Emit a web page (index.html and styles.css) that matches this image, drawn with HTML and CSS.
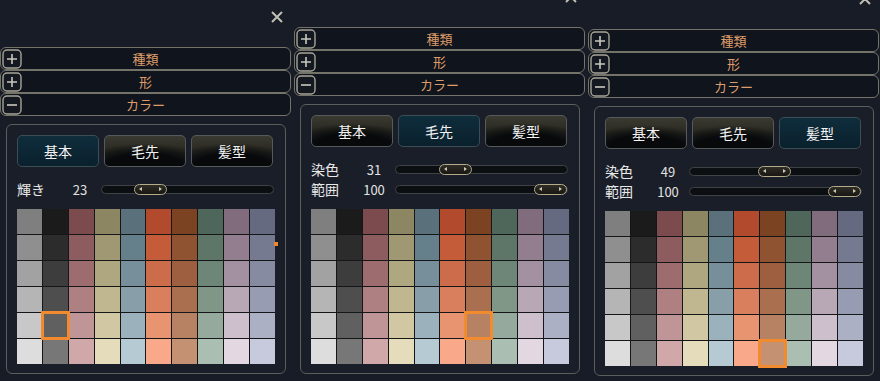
FILE: index.html
```html
<!DOCTYPE html>
<html lang="ja">
<head>
  <meta charset="UTF-8">
  <title>ヘアカラー</title>
  <link rel="stylesheet" href="styles.css">
</head>
<body>

<div class="shots">

  <section class="win win-a">
    <div class="win-top">
      <svg class="close" viewBox="0 0 12 12"><path d="M1 1L11 11M11 1L1 11"/></svg>
    </div>
    <div class="fold">
      <svg class="fold-btn" viewBox="0 0 20 20"><rect x="1" y="1" width="18" height="18" rx="4"/><path d="M5 10h10M10 5v10"/></svg>
      <span class="fold-title">種類</span>
    </div>
    <div class="fold">
      <svg class="fold-btn" viewBox="0 0 20 20"><rect x="1" y="1" width="18" height="18" rx="4"/><path d="M5 10h10M10 5v10"/></svg>
      <span class="fold-title">形</span>
    </div>
    <div class="fold">
      <svg class="fold-btn" viewBox="0 0 20 20"><rect x="1" y="1" width="18" height="18" rx="4"/><path d="M5 10h10"/></svg>
      <span class="fold-title">カラー</span>
    </div>
    <div class="color-box">
      <div class="tabs">
        <div class="tab active">基本</div>
        <div class="tab">毛先</div>
        <div class="tab">髪型</div>
      </div>
      <div class="sliders">
        <div class="slider-row">
          <span class="s-label">輝き</span><span class="s-val">23</span>
          <div class="track"><span class="thumb" style="--v:23"></span></div>
        </div>
      </div>
      <div class="swatches" data-sel="1,4"><span class="scroll-dot"></span></div>
    </div>
  </section>

  <section class="win win-b">
    <div class="win-top">
      <svg class="close" viewBox="0 0 12 12"><path d="M1 1L11 11M11 1L1 11"/></svg>
    </div>
    <div class="fold">
      <svg class="fold-btn" viewBox="0 0 20 20"><rect x="1" y="1" width="18" height="18" rx="4"/><path d="M5 10h10M10 5v10"/></svg>
      <span class="fold-title">種類</span>
    </div>
    <div class="fold">
      <svg class="fold-btn" viewBox="0 0 20 20"><rect x="1" y="1" width="18" height="18" rx="4"/><path d="M5 10h10M10 5v10"/></svg>
      <span class="fold-title">形</span>
    </div>
    <div class="fold">
      <svg class="fold-btn" viewBox="0 0 20 20"><rect x="1" y="1" width="18" height="18" rx="4"/><path d="M5 10h10"/></svg>
      <span class="fold-title">カラー</span>
    </div>
    <div class="color-box">
      <div class="tabs">
        <div class="tab">基本</div>
        <div class="tab active">毛先</div>
        <div class="tab">髪型</div>
      </div>
      <div class="sliders">
        <div class="slider-row">
          <span class="s-label">染色</span><span class="s-val">31</span>
          <div class="track"><span class="thumb" style="--v:31"></span></div>
        </div>
        <div class="slider-row">
          <span class="s-label">範囲</span><span class="s-val">100</span>
          <div class="track"><span class="thumb" style="--v:100"></span></div>
        </div>
      </div>
      <div class="swatches" data-sel="6,4"></div>
    </div>
  </section>

  <section class="win win-c">
    <div class="win-top">
      <svg class="close" viewBox="0 0 12 12"><path d="M1 1L11 11M11 1L1 11"/></svg>
    </div>
    <div class="fold">
      <svg class="fold-btn" viewBox="0 0 20 20"><rect x="1" y="1" width="18" height="18" rx="4"/><path d="M5 10h10M10 5v10"/></svg>
      <span class="fold-title">種類</span>
    </div>
    <div class="fold">
      <svg class="fold-btn" viewBox="0 0 20 20"><rect x="1" y="1" width="18" height="18" rx="4"/><path d="M5 10h10M10 5v10"/></svg>
      <span class="fold-title">形</span>
    </div>
    <div class="fold">
      <svg class="fold-btn" viewBox="0 0 20 20"><rect x="1" y="1" width="18" height="18" rx="4"/><path d="M5 10h10"/></svg>
      <span class="fold-title">カラー</span>
    </div>
    <div class="color-box">
      <div class="tabs">
        <div class="tab">基本</div>
        <div class="tab">毛先</div>
        <div class="tab active">髪型</div>
      </div>
      <div class="sliders">
        <div class="slider-row">
          <span class="s-label">染色</span><span class="s-val">49</span>
          <div class="track"><span class="thumb" style="--v:49"></span></div>
        </div>
        <div class="slider-row">
          <span class="s-label">範囲</span><span class="s-val">100</span>
          <div class="track"><span class="thumb" style="--v:100"></span></div>
        </div>
      </div>
      <div class="swatches" data-sel="6,5"></div>
    </div>
  </section>

</div>

<script>
  // one column per hue, light rows at the bottom
  const palette = [
    ["#7f7f7f","#8f8f8f","#a2a2a2","#b5b5b5","#c8c8c8","#dddddd"],
    ["#1b1b1b","#2c2c2c","#3d3d3d","#4e4e4e","#606060","#777777"],
    ["#7b4b4d","#8d5c5e","#9d6c6e","#ae8082","#bf9597","#d0a8a9"],
    ["#8d8663","#9f9872","#afa780","#c0b790","#d1c8a3","#e5dcbc"],
    ["#5a717b","#66808b","#768f9a","#889fa9","#9bb1bb","#b6cad4"],
    ["#b24b2d","#c45c3a","#cd6c4b","#da7f5d","#e89470","#f9a98a"],
    ["#7c4322","#8f5332","#9d5f3f","#aa6f4f","#b78163","#c59173"],
    ["#4f675a","#5e7668","#6e8677","#809788","#95aa9c","#abbeb2"],
    ["#806c7c","#927e8e","#a391a1","#b8a8b6","#cdbfcc","#e3d7e1"],
    ["#666a80","#767a90","#878ba2","#989cb2","#acb0c5","#c7c9dd"]
  ];

  document.querySelectorAll(".swatches").forEach(grid => {
    const sel = grid.dataset.sel.split(",").map(Number);
    for (let r = 0; r < 6; r++) {
      for (let c = 0; c < 10; c++) {
        const cell = document.createElement("span");
        cell.className = "swatch";
        if (c === sel[0] && r === sel[1]) cell.classList.add("picked");
        cell.style.background = palette[c][r];
        grid.appendChild(cell);
      }
    }
  });
</script>

</body>
</html>
```

FILE: styles.css
```css
body {
  margin: 0;
  background: #181c26;
  font-family: "Noto Sans CJK JP", "Noto Sans", sans-serif;
  color: #ececec;
  overflow: hidden;
}

.shots { display: flex; align-items: flex-start; }

.win { flex: none; width: 291px; }
.win-a { margin-top: 11px; }
.win-b { margin-top: -9px; margin-left: 3px; }
.win-c { margin-top: -7px; margin-left: 3px; }

.win-top {
  height: 36px;
  display: flex;
  justify-content: flex-end;
  align-items: flex-start;
  padding-right: 8px;
}
.close { width: 12px; height: 12px; }
.close path { stroke: #bfbfb4; stroke-width: 2; fill: none; }

/* collapsible header rows */
.fold {
  box-sizing: border-box;
  height: 23px;
  border: 1px solid #74736a;
  border-radius: 6px;
  background: #10141c;
  display: grid;
  grid-template-columns: 21px 1fr 21px;
  align-items: center;
}
.fold-btn { width: 20px; height: 20px; margin-left: 1px; }
.fold-btn rect { fill: #141820; stroke: #a6a598; stroke-width: 1.4; }
.fold-btn path { stroke: #c8c7bc; stroke-width: 1.6; fill: none; }
.fold-title {
  text-align: center;
  color: #de9c6a;
  font-size: 13px;
  line-height: 21px;
}

.color-box {
  box-sizing: border-box;
  width: 280px;
  margin: 8px 0 0 6px;
  border: 1px solid #5b5e5a;
  border-radius: 6px;
  background: #1a1e28;
  padding: 10px 10px 9px 10px;
}

.tabs {
  display: grid;
  grid-template-columns: repeat(3, 82px);
  gap: 5px;
}
.tab {
  box-sizing: border-box;
  height: 32px;
  border: 1px solid #565a5a;
  border-radius: 5px;
  display: flex;
  align-items: center;
  justify-content: center;
  font-size: 14px;
  color: #f2f2f2;
  background:
    radial-gradient(ellipse 85% 75% at 50% 100%, #07090b 55%, rgba(7, 9, 11, 0) 100%),
    linear-gradient(#3b3a31, #27271f 55%, #172832);
}
.tab.active {
  border-color: #3b4d55;
  background: linear-gradient(#0f2d3c, #0a202d);
}

.sliders { padding: 12px 0 10px; }
.slider-row {
  height: 20px;
  display: flex;
  align-items: center;
}
.s-label { width: 46px; font-size: 14px; color: #e8e8e8; }
.s-val { width: 34px; text-align: center; font-size: 13px; color: #e2e2e2; }
.track {
  position: relative;
  box-sizing: border-box;
  width: 173px;
  height: 9px;
  margin-left: 4px;
  border: 1px solid #3f4345;
  border-radius: 5px;
  background: #0c0f12;
}
.thumb {
  position: absolute;
  top: -2px;
  left: calc((100% - 33px) * var(--v) / 100);
  box-sizing: border-box;
  width: 33px;
  height: 11px;
  border: 1px solid #b4ab8a;
  border-radius: 6px;
  background: linear-gradient(#2e2d26, #181714);
}
.thumb::before,
.thumb::after {
  content: "";
  position: absolute;
  top: 2.5px;
  border-top: 2.5px solid transparent;
  border-bottom: 2.5px solid transparent;
}
.thumb::before { left: 4px; border-right: 3px solid #cfc9b0; }
.thumb::after { right: 4px; border-left: 3px solid #cfc9b0; }

.swatches {
  position: relative;
  width: 258px;
  height: 155px;
  display: grid;
  grid-template-columns: repeat(10, 1fr);
  grid-template-rows: repeat(6, 1fr);
  gap: 1px;
  background: #151617;
}
.swatch { display: block; }
.swatch.picked {
  position: relative;
  z-index: 1;
  outline: 3px solid #f28a2f;
  outline-offset: -1px;
  box-shadow: inset 0 0 0 1px rgba(255, 255, 255, 0.25);
}
.scroll-dot {
  position: absolute;
  left: 257px;
  top: 33px;
  width: 4px;
  height: 4px;
  background: #f0862c;
}
```
